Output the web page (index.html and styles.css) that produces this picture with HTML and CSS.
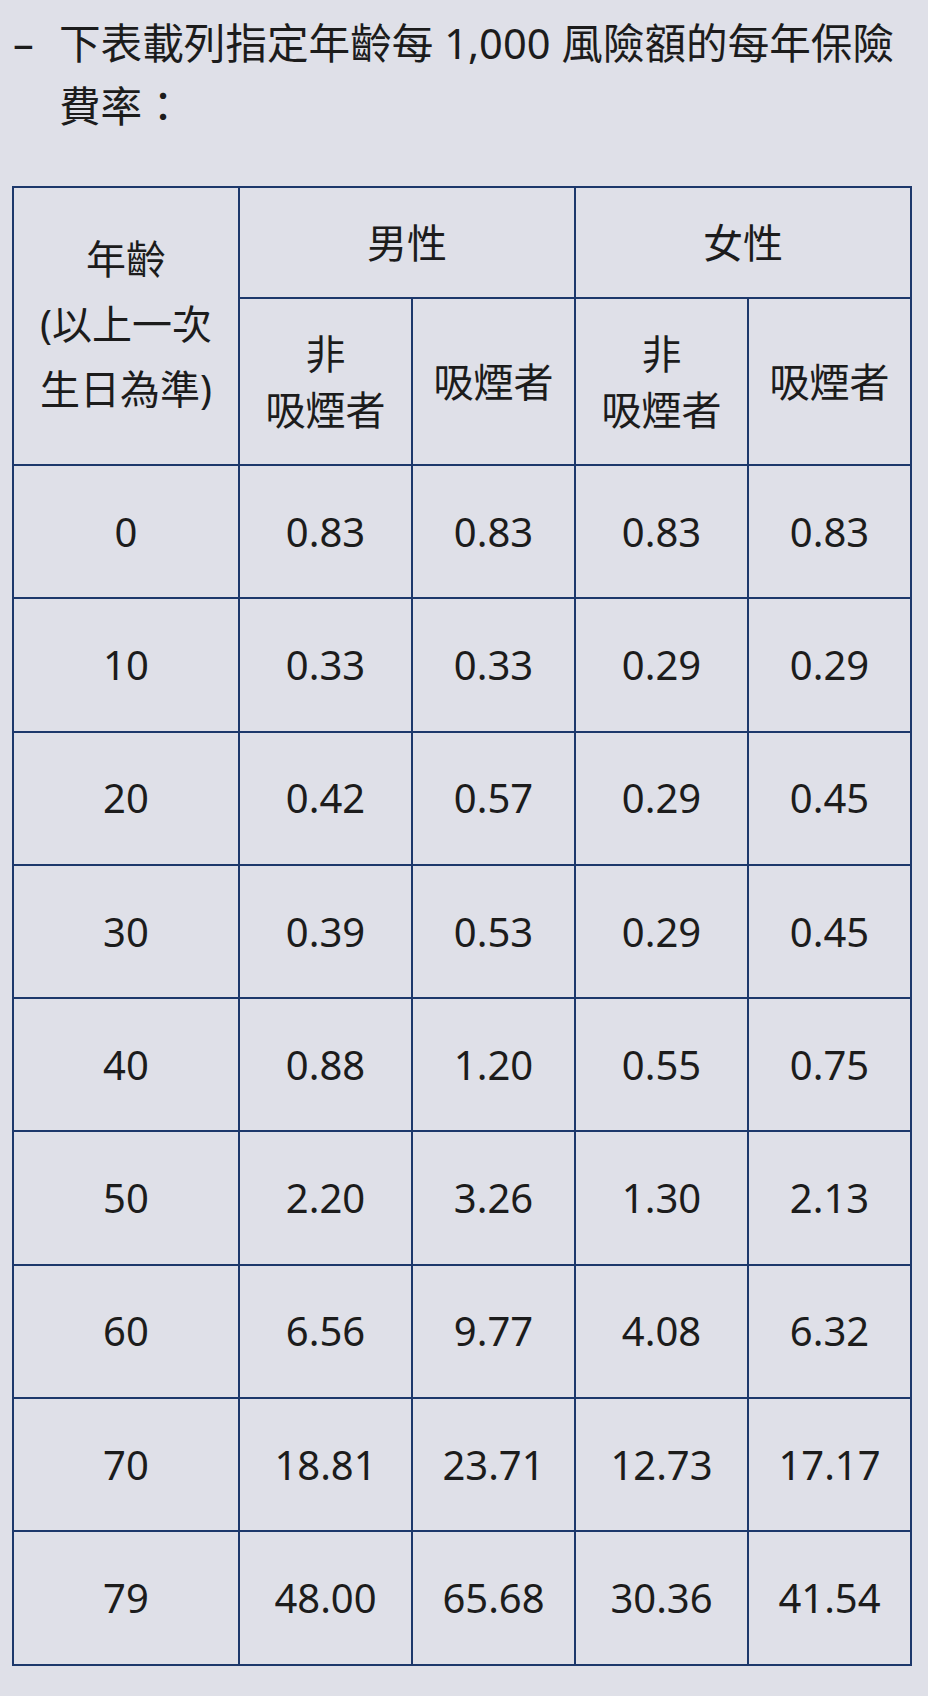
FILE: index.html
```html
<!DOCTYPE html>
<html lang="zh-Hant">
<head>
<meta charset="utf-8">
<link rel="stylesheet" href="styles.css">
</head>
<body>
<div class="page">
  <div class="item">
    <span class="dash">–</span>
    <p class="item-text">下表載列指定年齡每 1,000 風險額的每年保險費率：</p>
  </div>
  <table class="rates">
    <colgroup>
      <col class="c-age">
      <col class="c-a">
      <col class="c-b">
      <col class="c-a">
      <col class="c-b">
    </colgroup>
    <thead>
      <tr class="h1">
        <th rowspan="2" class="age-head">年齡<br>(以上一次<br>生日為準)</th>
        <th colspan="2">男性</th>
        <th colspan="2">女性</th>
      </tr>
      <tr class="h2">
        <th class="two">非<br>吸煙者</th>
        <th>吸煙者</th>
        <th class="two">非<br>吸煙者</th>
        <th>吸煙者</th>
      </tr>
    </thead>
    <tbody>
      <tr><td>0</td><td>0.83</td><td>0.83</td><td>0.83</td><td>0.83</td></tr>
      <tr><td>10</td><td>0.33</td><td>0.33</td><td>0.29</td><td>0.29</td></tr>
      <tr><td>20</td><td>0.42</td><td>0.57</td><td>0.29</td><td>0.45</td></tr>
      <tr><td>30</td><td>0.39</td><td>0.53</td><td>0.29</td><td>0.45</td></tr>
      <tr><td>40</td><td>0.88</td><td>1.20</td><td>0.55</td><td>0.75</td></tr>
      <tr><td>50</td><td>2.20</td><td>3.26</td><td>1.30</td><td>2.13</td></tr>
      <tr><td>60</td><td>6.56</td><td>9.77</td><td>4.08</td><td>6.32</td></tr>
      <tr><td>70</td><td>18.81</td><td>23.71</td><td>12.73</td><td>17.17</td></tr>
      <tr><td>79</td><td>48.00</td><td>65.68</td><td>30.36</td><td>41.54</td></tr>
    </tbody>
  </table>
</div>
</body>
</html>
```

FILE: styles.css
```css
html, body {
  margin: 0;
  padding: 0;
  background: #dfe0e8;
}

body {
  font-family: "Noto Sans", "Noto Sans CJK TC", sans-serif;
  color: #1c1c1c;
}

.page {
  padding: 12px 18px 30px 12px;
}

.item {
  display: flex;
  align-items: flex-start;
  font-size: 41.6px;
  line-height: 63px;
}

.dash {
  width: 46px;
  flex: none;
  padding-left: 1px;
}

.item-text {
  margin: 0;
  flex: 1;
}

.rates {
  margin-top: 48px;
  width: 898px;
  border-collapse: collapse;
  table-layout: fixed;
  font-size: 40px;
}

.c-age { width: 226px; }
.c-a { width: 173px; }
.c-b { width: 163px; }

.rates th,
.rates td {
  border: 2px solid #1d386b;
  text-align: center;
  vertical-align: middle;
  font-weight: normal;
  padding: 0;
}

.rates th {
  line-height: 56px;
}

.rates .age-head {
  line-height: 65px;
  padding-bottom: 6px;
}

.h1 { height: 111px; }
.h2 { height: 167px; }

.rates tbody tr { height: 133.3px; }

.rates td {
  line-height: 54px;
}
```
